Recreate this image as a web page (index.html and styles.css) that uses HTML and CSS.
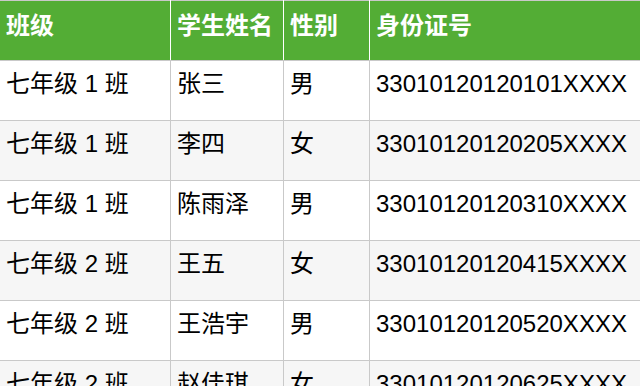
FILE: index.html
```html
<!DOCTYPE html>
<html lang="zh-CN">
<head>
<meta charset="utf-8">
<title>学生名单</title>
<link rel="stylesheet" href="styles.css">
</head>
<body>
<table class="roster">
  <colgroup>
    <col class="c-class">
    <col class="c-name">
    <col class="c-sex">
    <col class="c-id">
  </colgroup>
  <thead>
    <tr><th>班级</th><th>学生姓名</th><th>性别</th><th>身份证号</th></tr>
  </thead>
  <tbody>
    <tr><td>七年级 1 班</td><td>张三</td><td>男</td><td>33010120120101XXXX</td></tr>
    <tr><td>七年级 1 班</td><td>李四</td><td>女</td><td>33010120120205XXXX</td></tr>
    <tr><td>七年级 1 班</td><td>陈雨泽</td><td>男</td><td>33010120120310XXXX</td></tr>
    <tr><td>七年级 2 班</td><td>王五</td><td>女</td><td>33010120120415XXXX</td></tr>
    <tr><td>七年级 2 班</td><td>王浩宇</td><td>男</td><td>33010120120520XXXX</td></tr>
    <tr><td>七年级 2 班</td><td>赵佳琪</td><td>女</td><td>33010120120625XXXX</td></tr>
  </tbody>
</table>
</body>
</html>
```
FILE: styles.css
```css
html, body {
  margin: 0;
  padding: 0;
  background: #ffffff;
  overflow: hidden;
}

.roster {
  border-collapse: collapse;
  table-layout: fixed;
  width: 641px;
  margin-left: -1px;
  font-family: "Liberation Sans", "Noto Sans CJK SC", sans-serif;
  font-size: 24px;
  line-height: 24px;
  color: #000000;
}

.c-class { width: 171px; }
.c-name { width: 113px; }
.c-sex { width: 86px; }
.c-id { width: 271px; }

.roster th,
.roster td {
  border: 1px solid #c9c9c9;
  text-align: left;
  vertical-align: top;
  padding: 0 6px;
  white-space: nowrap;
  overflow: hidden;
}

.roster th {
  background: #53ad35;
  color: #ffffff;
  font-weight: bold;
  height: 60px;
  box-sizing: border-box;
  padding-top: 13px;
  border-left-color: #ffffff;
  border-right-color: #ffffff;
}

.roster th:last-child {
  border-right-color: #c9c9c9;
}

.roster td {
  height: 60px;
  box-sizing: border-box;
  padding-top: 11px;
}

.roster tbody tr:nth-child(even) td {
  background: #f6f6f6;
}
```
